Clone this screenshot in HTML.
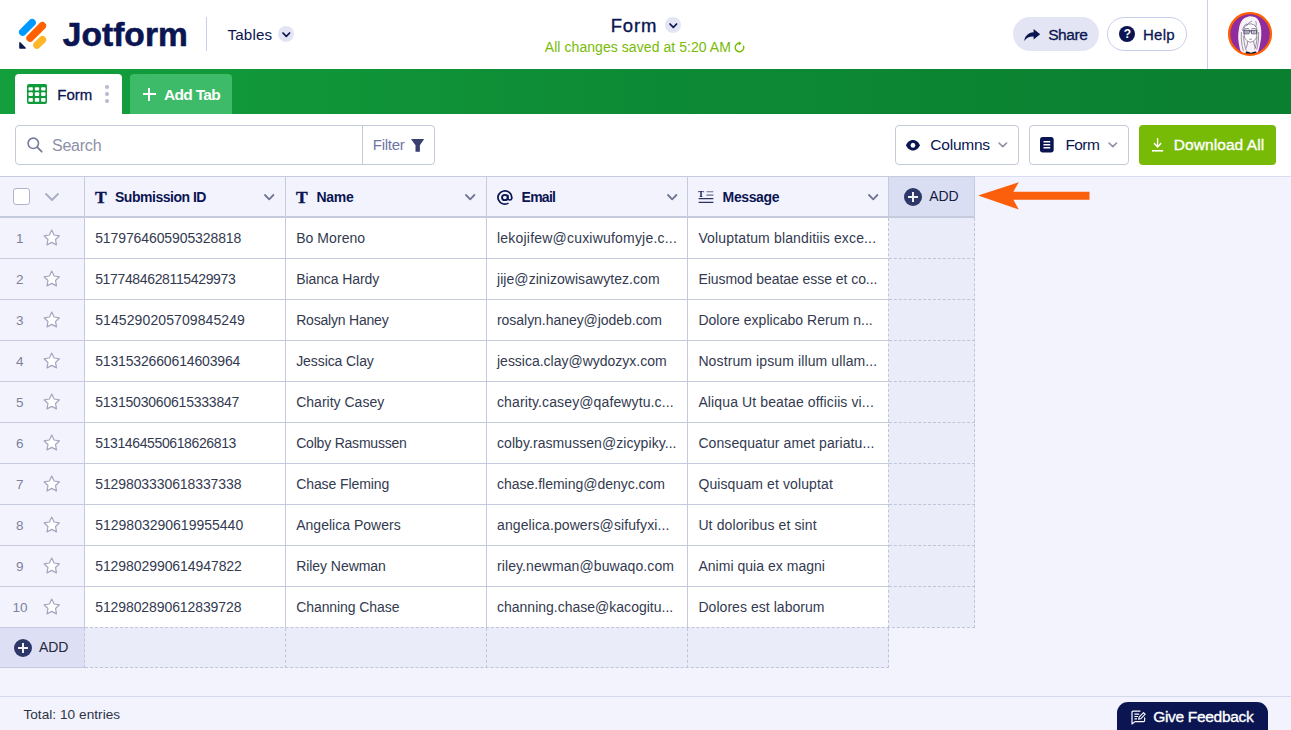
<!DOCTYPE html>
<html lang="en"><head><meta charset="utf-8"><title>Form - Jotform Tables</title>
<style>
*{box-sizing:border-box;margin:0;padding:0}
html,body{width:1291px;height:730px;overflow:hidden;background:#f3f3fe;font-family:"Liberation Sans",sans-serif;color:#0a1551}
.t{position:absolute;white-space:nowrap;display:block}
.a{position:absolute}
svg{position:absolute;overflow:visible}
.hdr{left:0;top:0;width:1291px;height:69px;background:#fff}
.bar{left:0;top:69px;width:1291px;height:45px;background:linear-gradient(90deg,#13a03c 0%,#0d8a35 50%,#0a7f30 100%)}
.tool{left:0;top:114px;width:1291px;height:62px;background:#fff}
.btn{border:1px solid #c3cad8;border-radius:4px;background:#fff}
.hl{background:#c5cbdd;height:1px}
.vl{background:#c5cbdd;width:1px}
</style></head><body>

<div class="a hdr"></div>
<svg style="left:10.4px;top:10.2px" width="50" height="50" viewBox="0 0 50 50">
<path d="M9.9 32.7 L9.9 38.1 L15.3 38.1 Z" fill="#0a1551" stroke="#0a1551" stroke-width="1.3" stroke-linejoin="round"/>
<path d="M22.1 12.7 L12.7 22.1" stroke="#0099ff" stroke-width="7.5" stroke-linecap="round"/>
<path d="M32.4 15.75 L20.07 28.08" stroke="#ff6100" stroke-width="7.5" stroke-linecap="round"/>
<path d="M32.4 29.7 L26.9 35.1" stroke="#ffb629" stroke-width="7.5" stroke-linecap="round"/>
</svg>
<span class="t " style="left:62.8px;top:17.84px;font-size:33.5px;line-height:33.5px;font-weight:700;color:#0a1551;letter-spacing:0.042px;-webkit-text-stroke:0.6px #0a1551;">Jotform</span>
<div class="a" style="left:206px;top:17px;width:1px;height:34px;background:#c8ceed"></div>
<span class="t " style="left:227.5px;top:26.63px;font-size:15.2px;line-height:15.2px;font-weight:400;color:#0a1551;letter-spacing:0.149px;">Tables</span>
<div class="a" style="left:278.3px;top:26.3px;width:16px;height:16px;border-radius:8px;background:#e3e5f5"></div><svg style="left:283.0px;top:33.1px" width="6.6" height="3.3" viewBox="0 0 6.6 3.3"><path d="M0 0 L3.3 3.3 L6.6 0" fill="none" stroke="#0a1551" stroke-width="1.7" stroke-linecap="round" stroke-linejoin="round"/></svg>
<span class="t " style="left:610.7px;top:16.54px;font-size:18.5px;line-height:18.5px;font-weight:400;color:#0a1551;letter-spacing:0.857px;-webkit-text-stroke:0.35px #0a1551;">Form</span>
<div class="a" style="left:665.0px;top:17.0px;width:16px;height:16px;border-radius:8px;background:#e3e5f5"></div><svg style="left:669.7px;top:23.9px" width="6.6" height="3.3" viewBox="0 0 6.6 3.3"><path d="M0 0 L3.3 3.3 L6.6 0" fill="none" stroke="#0a1551" stroke-width="1.7" stroke-linecap="round" stroke-linejoin="round"/></svg>
<span class="t " style="left:544.8px;top:40.45px;font-size:14px;line-height:14px;font-weight:400;color:#78bb07;letter-spacing:0.062px;">All changes saved at 5:20 AM</span>
<svg style="left:733.7px;top:41.3px" width="11" height="12" viewBox="0 0 11 12"><path d="M5.8 2.2 A4.3 4.3 0 1 0 9.6 5.2" fill="none" stroke="#78bb07" stroke-width="1.4" stroke-linecap="round"/><path d="M4.6 0.2 L7.6 2.3 L4.9 4.6 Z" fill="#78bb07"/></svg>
<div class="a" style="left:1013px;top:17px;width:86px;height:34px;border-radius:17px;background:#e3e5f5"></div>
<svg style="left:1024px;top:28.6px" width="16.4" height="12.2" viewBox="0 0 17 13"><path d="M10 0 L17 5.6 L10 11.2 V7.9 C5.6 7.7 2.6 9.2 0 12.8 C0.7 7.4 4 3.9 10 3.4 Z" fill="#0a1551"/></svg>
<span class="t " style="left:1048.2px;top:26.88px;font-size:15.5px;line-height:15.5px;font-weight:400;color:#0a1551;letter-spacing:-0.415px;-webkit-text-stroke:0.3px #0a1551;">Share</span>
<div class="a" style="left:1107px;top:17px;width:80px;height:34px;border-radius:17px;background:#fff;border:1px solid #c8ceed"></div>
<div class="a" style="left:1119px;top:26px;width:16px;height:16px;border-radius:8px;background:#0a1551"></div>
<span class="t " style="left:1123.7px;top:28.14px;font-size:12px;line-height:12px;font-weight:700;color:#fff;">?</span>
<span class="t " style="left:1143.0px;top:26.60px;font-size:15px;line-height:15px;font-weight:400;color:#0a1551;letter-spacing:0.285px;-webkit-text-stroke:0.3px #0a1551;">Help</span>
<div class="a" style="left:1207px;top:0;width:1px;height:69px;background:#c8ceed"></div>
<svg style="left:1228px;top:12px" width="44" height="44" viewBox="0 0 44 44">
<circle cx="22" cy="22" r="21.5" fill="#902c9e"/>
<g>
<path d="M21.6 4.2 C19.8 4.6 18.2 5.2 16.7 6 C15 7 13.8 8.4 13 10.1 C12 12 11.4 13.8 11.1 15.8 C10.5 19 10.2 22 10.2 24.9 C10.3 28 10.6 30.6 11.1 33.1 L12.1 38 L14.6 41.6 L29.4 41.6 L30.6 38 C31.4 35.6 32 33.2 32.3 30.6 C32.9 28 33.3 25.6 33.3 23.2 C33.4 20 33.2 17 32.7 14.2 C32.2 12 31.5 10 30.6 8.4 C29.5 6.9 28.2 5.8 26.5 5.1 C25 4.4 23.4 4.1 21.6 4.2 Z" fill="#f7f3f8"/>
<path d="M16 17 C16.5 13.5 20 11.5 23.5 12 C26.5 12.4 28.6 14.5 29 17.5 L28.8 24 C28 27.5 25.5 30 22.5 30 C19.5 30 17 27.5 16.2 24 Z" fill="#fff" stroke="#54465f" stroke-width="0.6"/>
<path d="M15.4 18.4 H29 M16 18.5 v3.3 h5 v-3.3 M23.6 18.5 v3.3 h5 v-3.3 M21 19.8 h2.6" fill="none" stroke="#3a3150" stroke-width="0.75"/>
<path d="M17 19.3 h3 v1.5 h-3 z M24.6 19.3 h3 v1.5 h-3 z" fill="#8f88a3"/>
<path d="M16.4 17.2 C18 16.4 20 16.4 21.4 17 M23.4 17 C25 16.4 27 16.4 28.4 17.2" fill="none" stroke="#4a3d5c" stroke-width="0.7"/>
<path d="M21.4 27.2 h2.4" stroke="#55465f" stroke-width="0.7"/>
<path d="M19 11.6 C16 13 14.8 16 14.6 19 M24 9 C21 10.6 19.4 12 18.6 14 M27.6 9 C28.6 11 28.4 13.4 27.4 15 M13.4 20 C13 27 13.6 33 15.4 39 M15.6 24 C15.8 30 16.8 35 18.4 38.6 M30.6 20 C30.8 27 30.2 32 28.6 37.6 M29 25 C28.8 30 28 34 26.6 37.4" fill="none" stroke="#5e5070" stroke-width="0.6"/>
<path d="M17.6 40 C19.6 38.8 21.4 40.8 23 40.8 C24.8 40.8 26.6 38.8 28.6 40 L28 42.7 L18 42.7 Z" fill="#1d1830"/><path d="M19.4 29.4 C19.6 32 19 34 17.8 36.4 M25.8 29.4 C25.8 32 26.4 34 27.6 36.2" fill="none" stroke="#54465f" stroke-width="0.6"/>
</g>
<circle cx="22" cy="22" r="20.9" fill="none" stroke="#ff6100" stroke-width="2.3"/>
</svg>
<div class="a bar"></div>
<div class="a" style="left:15px;top:74px;width:107px;height:40px;background:#fff;border-radius:4px 4px 0 0"></div>
<svg style="left:27px;top:84px" width="20" height="20" viewBox="0 0 20 20"><rect x="0" y="0" width="20" height="20" rx="2" fill="#0f9a3b"/><g fill="#fff"><rect x="1.5" y="3.2" width="4.4" height="3.2" rx="0.9"/><rect x="7.8" y="3.2" width="4.4" height="3.2" rx="0.9"/><rect x="14.1" y="3.2" width="4.4" height="3.2" rx="0.9"/><rect x="1.5" y="8.3" width="4.4" height="3.7" rx="0.9"/><rect x="7.8" y="8.3" width="4.4" height="3.7" rx="0.9"/><rect x="14.1" y="8.3" width="4.4" height="3.7" rx="0.9"/><rect x="1.5" y="14.1" width="4.4" height="3.7" rx="0.9"/><rect x="7.8" y="14.1" width="4.4" height="3.7" rx="0.9"/><rect x="14.1" y="14.1" width="4.4" height="3.7" rx="0.9"/></g></svg>
<span class="t " style="left:57.3px;top:87.40px;font-size:15px;line-height:15px;font-weight:400;color:#0a1551;letter-spacing:0.000px;-webkit-text-stroke:0.3px #0a1551;">Form</span>
<div class="a" style="left:105.3px;top:85.2px;width:4px;height:4px;border-radius:2px;background:#b5b9d1"></div>
<div class="a" style="left:105.3px;top:92.1px;width:4px;height:4px;border-radius:2px;background:#b5b9d1"></div>
<div class="a" style="left:105.3px;top:98.8px;width:4px;height:4px;border-radius:2px;background:#b5b9d1"></div>
<div class="a" style="left:130px;top:74px;width:102px;height:40px;background:#3dbb68;border-radius:4px 4px 0 0"></div>
<div class="a" style="left:142.5px;top:93.2px;width:13.4px;height:2px;background:#fff"></div><div class="a" style="left:148.2px;top:87.5px;width:2px;height:13.4px;background:#fff"></div>
<span class="t " style="left:164.0px;top:86.88px;font-size:15.5px;line-height:15.5px;font-weight:700;color:#fff;letter-spacing:-0.692px;">Add Tab</span>
<div class="a tool"></div>
<div class="a btn" style="left:15px;top:125px;width:420px;height:40px"></div>
<div class="a" style="left:362px;top:126px;width:1px;height:38px;background:#c3cad8"></div>
<svg style="left:26.8px;top:136.8px" width="16" height="16" viewBox="0 0 16 16"><circle cx="6.3" cy="6.3" r="5.2" fill="none" stroke="#767b9c" stroke-width="1.6"/><path d="M10.2 10.2 L14.7 14.7" stroke="#767b9c" stroke-width="1.8" stroke-linecap="round"/></svg>
<span class="t " style="left:52.0px;top:138.46px;font-size:16px;line-height:16px;font-weight:400;color:#8d91a8;letter-spacing:-0.234px;">Search</span>
<span class="t " style="left:372.8px;top:137.30px;font-size:15px;line-height:15px;font-weight:400;color:#6f76a7;letter-spacing:-0.257px;">Filter</span>
<svg style="left:410.8px;top:139.1px" width="13.2" height="12.7" viewBox="0 0 13.2 12.7"><path d="M0 0 H13.2 L8.9 6.3 V12.7 H4.5 V6.3 Z" fill="#394070"/></svg>
<div class="a btn" style="left:895px;top:125px;width:124px;height:40px"></div>
<svg style="left:906px;top:139.6px" width="13.9" height="10.5" viewBox="0 0 15 10.4" preserveAspectRatio="none"><path d="M7.5 0 C11 0 13.8 2.4 15 5.2 C13.8 8 11 10.4 7.5 10.4 C4 10.4 1.2 8 0 5.2 C1.2 2.4 4 0 7.5 0 Z" fill="#0a1551"/><circle cx="7.5" cy="5.2" r="2.5" fill="#fff"/></svg>
<span class="t " style="left:930.3px;top:136.88px;font-size:15.5px;line-height:15.5px;font-weight:400;color:#0a1551;letter-spacing:-0.225px;">Columns</span>
<svg style="left:999.0px;top:142.6px" width="7.6" height="3.7" viewBox="0 0 7.6 3.7"><path d="M0 0 L3.8 3.7 L7.6 0" fill="none" stroke="#8d91a8" stroke-width="1.6" stroke-linecap="round" stroke-linejoin="round"/></svg>
<div class="a btn" style="left:1029px;top:125px;width:100px;height:40px"></div>
<svg style="left:1040.3px;top:137.3px" width="13.7" height="15.4" viewBox="0 0 13.4 15" preserveAspectRatio="none"><rect x="0" y="0" width="13.4" height="15" rx="2.6" fill="#0a1551"/><path d="M3.4 4.6 H10 M3.4 7.5 H10 M3.4 10.4 H10" stroke="#fff" stroke-width="1.5"/></svg>
<span class="t " style="left:1065.5px;top:136.88px;font-size:15.5px;line-height:15.5px;font-weight:400;color:#0a1551;letter-spacing:-0.618px;">Form</span>
<svg style="left:1108.5px;top:142.6px" width="7.6" height="3.7" viewBox="0 0 7.6 3.7"><path d="M0 0 L3.8 3.7 L7.6 0" fill="none" stroke="#8d91a8" stroke-width="1.6" stroke-linecap="round" stroke-linejoin="round"/></svg>
<div class="a" style="left:1139px;top:125px;width:137px;height:40px;border-radius:4px;background:#78bb07"></div>
<svg style="left:1152.3px;top:138.2px" width="11.2" height="13.8" viewBox="0 0 12.6 14" preserveAspectRatio="none"><path d="M6.3 0 V9 M2.3 5.2 L6.3 9.2 L10.3 5.2" fill="none" stroke="#fff" stroke-width="1.5"/><path d="M0 13 H12.6" stroke="#fff" stroke-width="1.6"/></svg>
<span class="t " style="left:1173.7px;top:136.88px;font-size:15.5px;line-height:15.5px;font-weight:400;color:#fff;letter-spacing:0.083px;-webkit-text-stroke:0.35px #fff;">Download All</span>
<div class="a" style="left:0;top:176px;width:1291px;height:42px;background:#f3f3fe"></div>
<div class="a" style="left:0;top:176px;width:1291px;height:1px;background:#d9ddf2"></div>
<div class="a hl" style="left:0;top:176px;width:975px"></div>
<div class="a" style="left:889px;top:177px;width:86px;height:41px;background:#dadef3;border-right:1px solid #c5cbdd"></div>
<div class="a" style="left:85px;top:218px;width:804px;height:410px;background:#fff"></div>
<div class="a" style="left:889px;top:218px;width:86px;height:410px;background:#eaecfa;border-right:1px dashed #bfc5da"></div>
<div class="a" style="left:0;top:628px;width:85px;height:40px;background:#dddff5;border-bottom:1px solid #c5cbdd"></div>
<div class="a" style="left:85px;top:628px;width:804px;height:40px;background:#eaecfa;border-right:1px dashed #bfc5da;border-bottom:1px dashed #bfc5da"></div>
<div class="a" style="left:285px;top:628px;width:1px;height:40px;border-left:1px dashed #bfc5da"></div>
<div class="a" style="left:486px;top:628px;width:1px;height:40px;border-left:1px dashed #bfc5da"></div>
<div class="a" style="left:687px;top:628px;width:1px;height:40px;border-left:1px dashed #bfc5da"></div>
<div class="a" style="left:0;top:216px;width:975px;height:2px;background:#c5cbdd"></div>
<div class="a vl" style="left:84px;top:176px;height:452px"></div>
<div class="a vl" style="left:285px;top:176px;height:452px"></div>
<div class="a vl" style="left:486px;top:176px;height:452px"></div>
<div class="a vl" style="left:687px;top:176px;height:452px"></div>
<div class="a vl" style="left:888px;top:176px;height:42px"></div>
<div class="a" style="left:888px;top:218px;width:1px;height:410px;background:#f4f5fc;border-left:1px dashed #bfc5da"></div>
<div class="a" style="left:84px;top:628px;width:1px;height:40px;border-left:1px dashed #bfc5da"></div>
<div class="a hl" style="left:0;top:258px;width:889px"></div>
<div class="a" style="left:889px;top:258px;width:86px;height:1px;border-top:1px dashed #bfc5da"></div>
<div class="a hl" style="left:0;top:299px;width:889px"></div>
<div class="a" style="left:889px;top:299px;width:86px;height:1px;border-top:1px dashed #bfc5da"></div>
<div class="a hl" style="left:0;top:340px;width:889px"></div>
<div class="a" style="left:889px;top:340px;width:86px;height:1px;border-top:1px dashed #bfc5da"></div>
<div class="a hl" style="left:0;top:381px;width:889px"></div>
<div class="a" style="left:889px;top:381px;width:86px;height:1px;border-top:1px dashed #bfc5da"></div>
<div class="a hl" style="left:0;top:422px;width:889px"></div>
<div class="a" style="left:889px;top:422px;width:86px;height:1px;border-top:1px dashed #bfc5da"></div>
<div class="a hl" style="left:0;top:463px;width:889px"></div>
<div class="a" style="left:889px;top:463px;width:86px;height:1px;border-top:1px dashed #bfc5da"></div>
<div class="a hl" style="left:0;top:504px;width:889px"></div>
<div class="a" style="left:889px;top:504px;width:86px;height:1px;border-top:1px dashed #bfc5da"></div>
<div class="a hl" style="left:0;top:545px;width:889px"></div>
<div class="a" style="left:889px;top:545px;width:86px;height:1px;border-top:1px dashed #bfc5da"></div>
<div class="a hl" style="left:0;top:586px;width:889px"></div>
<div class="a" style="left:889px;top:586px;width:86px;height:1px;border-top:1px dashed #bfc5da"></div>
<div class="a" style="left:0;top:627px;width:85px;height:1px;background:#c5cbdd"></div>
<div class="a" style="left:85px;top:627px;width:890px;height:1px;border-top:1px dashed #bfc5da;background:#eef0fb"></div>
<div class="a" style="left:13px;top:188px;width:17px;height:17px;border:1.6px solid #b0b4c9;border-radius:3px;background:#fff"></div>
<svg style="left:46.0px;top:193.5px" width="12" height="6" viewBox="0 0 12 6"><path d="M0 0 L6.0 6 L12 0" fill="none" stroke="#aaaec3" stroke-width="1.9" stroke-linecap="round" stroke-linejoin="round"/></svg>
<span class="t " style="left:94.9px;top:189.19px;font-size:17.5px;line-height:17.5px;font-weight:700;color:#0a1551;font-family:'Liberation Serif',serif;-webkit-text-stroke:0.4px #0a1551;">T</span>
<span class="t " style="left:115.0px;top:190.15px;font-size:14px;line-height:14px;font-weight:700;color:#0a1551;letter-spacing:-0.480px;">Submission ID</span>
<span class="t " style="left:295.9px;top:189.19px;font-size:17.5px;line-height:17.5px;font-weight:700;color:#0a1551;font-family:'Liberation Serif',serif;-webkit-text-stroke:0.4px #0a1551;">T</span>
<span class="t " style="left:316.5px;top:190.15px;font-size:14px;line-height:14px;font-weight:700;color:#0a1551;letter-spacing:-0.285px;">Name</span>
<svg style="left:497.1px;top:189.7px" width="15.8" height="15" viewBox="0 0 16 16" preserveAspectRatio="none"><circle cx="8" cy="8" r="2.9" fill="none" stroke="#0a1551" stroke-width="1.9"/><path d="M10.9 5 V9 A2.1 2.1 0 0 0 15 9 V8 A7 7 0 1 0 11.6 14" fill="none" stroke="#0a1551" stroke-width="1.8"/></svg>
<span class="t " style="left:521.5px;top:190.15px;font-size:14px;line-height:14px;font-weight:700;color:#0a1551;letter-spacing:-0.712px;">Email</span>
<span class="t " style="left:698.1px;top:189.55px;font-size:8.8px;line-height:8.8px;font-weight:700;color:#0a1551;font-family:'Liberation Serif',serif;">T</span>
<svg style="left:698px;top:190px" width="16" height="14" viewBox="0 0 16 14"><path d="M8.4 1.7 H15.4 M8.4 5.1 H15.4" stroke="#6a7098" stroke-width="1.1"/><path d="M0.6 8.6 H15.4 M0.6 12.3 H15.4" stroke="#2a3262" stroke-width="1.2"/></svg>
<span class="t " style="left:722.6px;top:190.15px;font-size:14px;line-height:14px;font-weight:700;color:#0a1551;letter-spacing:-0.379px;">Message</span>
<svg style="left:265.3px;top:194.8px" width="8.4" height="4.3" viewBox="0 0 8.4 4.3"><path d="M0 0 L4.2 4.3 L8.4 0" fill="none" stroke="#6f7693" stroke-width="1.8" stroke-linecap="round" stroke-linejoin="round"/></svg>
<svg style="left:466.3px;top:194.8px" width="8.4" height="4.3" viewBox="0 0 8.4 4.3"><path d="M0 0 L4.2 4.3 L8.4 0" fill="none" stroke="#6f7693" stroke-width="1.8" stroke-linecap="round" stroke-linejoin="round"/></svg>
<svg style="left:667.8px;top:194.8px" width="8.4" height="4.3" viewBox="0 0 8.4 4.3"><path d="M0 0 L4.2 4.3 L8.4 0" fill="none" stroke="#6f7693" stroke-width="1.8" stroke-linecap="round" stroke-linejoin="round"/></svg>
<svg style="left:868.8px;top:194.8px" width="8.4" height="4.3" viewBox="0 0 8.4 4.3"><path d="M0 0 L4.2 4.3 L8.4 0" fill="none" stroke="#6f7693" stroke-width="1.8" stroke-linecap="round" stroke-linejoin="round"/></svg>
<div class="a" style="left:904px;top:188px;width:18px;height:18px;border-radius:9px;background:#2e3868"></div>
<div class="a" style="left:908.2px;top:196.2px;width:9.6px;height:1.6px;background:#f1f1f6"></div><div class="a" style="left:912.2px;top:192.2px;width:1.6px;height:9.6px;background:#f1f1f6"></div>
<span class="t " style="left:929.2px;top:189.45px;font-size:14px;line-height:14px;font-weight:400;color:#141b45;letter-spacing:-0.121px;">ADD</span>
<svg style="left:976px;top:178px" width="116" height="36" viewBox="0 0 116 36"><path d="M2.1 17.6 L42.8 4.2 Q40 9 37.4 13.7 L113.5 13.7 V21.7 L37.4 21.7 Q40 26.5 42.8 31.5 Z" fill="#fc5f0c"/></svg>
<span class="t " style="left:16.1px;top:231.57px;font-size:13.5px;line-height:13.5px;font-weight:400;color:#7c819b;">1</span>
<svg style="left:43.3px;top:229.3px" width="17.5" height="17" viewBox="0 0 17.5 17"><path d="M8.75 1.1 L11.1 6 L16.4 6.8 L12.55 10.55 L13.5 15.9 L8.75 13.4 L4 15.9 L4.95 10.55 L1.1 6.8 L6.4 6 Z" fill="#fff" stroke="#a3a7bf" stroke-width="1.2" stroke-linejoin="round"/></svg>
<span class="t " style="left:95.2px;top:231.15px;font-size:14px;line-height:14px;font-weight:400;color:#333a50;letter-spacing:-0.102px;">5179764605905328818</span>
<span class="t " style="left:296.2px;top:231.15px;font-size:14px;line-height:14px;font-weight:400;color:#333a50;letter-spacing:0.057px;">Bo Moreno</span>
<span class="t " style="left:497.0px;top:231.15px;font-size:14px;line-height:14px;font-weight:400;color:#333a50;letter-spacing:0.204px;">lekojifew@cuxiwufomyje.c...</span>
<span class="t " style="left:698.4px;top:231.15px;font-size:14px;line-height:14px;font-weight:400;color:#333a50;letter-spacing:0.147px;">Voluptatum blanditiis exce...</span>
<span class="t " style="left:16.1px;top:272.57px;font-size:13.5px;line-height:13.5px;font-weight:400;color:#7c819b;">2</span>
<svg style="left:43.3px;top:270.3px" width="17.5" height="17" viewBox="0 0 17.5 17"><path d="M8.75 1.1 L11.1 6 L16.4 6.8 L12.55 10.55 L13.5 15.9 L8.75 13.4 L4 15.9 L4.95 10.55 L1.1 6.8 L6.4 6 Z" fill="#fff" stroke="#a3a7bf" stroke-width="1.2" stroke-linejoin="round"/></svg>
<span class="t " style="left:95.2px;top:272.15px;font-size:14px;line-height:14px;font-weight:400;color:#333a50;letter-spacing:-0.353px;">5177484628115429973</span>
<span class="t " style="left:296.2px;top:272.15px;font-size:14px;line-height:14px;font-weight:400;color:#333a50;letter-spacing:-0.087px;">Bianca Hardy</span>
<span class="t " style="left:497.0px;top:272.15px;font-size:14px;line-height:14px;font-weight:400;color:#333a50;letter-spacing:0.060px;">jije@zinizowisawytez.com</span>
<span class="t " style="left:698.4px;top:272.15px;font-size:14px;line-height:14px;font-weight:400;color:#333a50;letter-spacing:-0.056px;">Eiusmod beatae esse et co...</span>
<span class="t " style="left:16.1px;top:313.57px;font-size:13.5px;line-height:13.5px;font-weight:400;color:#7c819b;">3</span>
<svg style="left:43.3px;top:311.3px" width="17.5" height="17" viewBox="0 0 17.5 17"><path d="M8.75 1.1 L11.1 6 L16.4 6.8 L12.55 10.55 L13.5 15.9 L8.75 13.4 L4 15.9 L4.95 10.55 L1.1 6.8 L6.4 6 Z" fill="#fff" stroke="#a3a7bf" stroke-width="1.2" stroke-linejoin="round"/></svg>
<span class="t " style="left:95.2px;top:313.15px;font-size:14px;line-height:14px;font-weight:400;color:#333a50;letter-spacing:0.098px;">5145290205709845249</span>
<span class="t " style="left:296.2px;top:313.15px;font-size:14px;line-height:14px;font-weight:400;color:#333a50;letter-spacing:-0.203px;">Rosalyn Haney</span>
<span class="t " style="left:497.0px;top:313.15px;font-size:14px;line-height:14px;font-weight:400;color:#333a50;letter-spacing:-0.043px;">rosalyn.haney@jodeb.com</span>
<span class="t " style="left:698.4px;top:313.15px;font-size:14px;line-height:14px;font-weight:400;color:#333a50;letter-spacing:0.032px;">Dolore explicabo Rerum n...</span>
<span class="t " style="left:16.1px;top:354.57px;font-size:13.5px;line-height:13.5px;font-weight:400;color:#7c819b;">4</span>
<svg style="left:43.3px;top:352.3px" width="17.5" height="17" viewBox="0 0 17.5 17"><path d="M8.75 1.1 L11.1 6 L16.4 6.8 L12.55 10.55 L13.5 15.9 L8.75 13.4 L4 15.9 L4.95 10.55 L1.1 6.8 L6.4 6 Z" fill="#fff" stroke="#a3a7bf" stroke-width="1.2" stroke-linejoin="round"/></svg>
<span class="t " style="left:95.2px;top:354.15px;font-size:14px;line-height:14px;font-weight:400;color:#333a50;letter-spacing:-0.155px;">5131532660614603964</span>
<span class="t " style="left:296.2px;top:354.15px;font-size:14px;line-height:14px;font-weight:400;color:#333a50;letter-spacing:-0.083px;">Jessica Clay</span>
<span class="t " style="left:497.0px;top:354.15px;font-size:14px;line-height:14px;font-weight:400;color:#333a50;letter-spacing:-0.009px;">jessica.clay@wydozyx.com</span>
<span class="t " style="left:698.4px;top:354.15px;font-size:14px;line-height:14px;font-weight:400;color:#333a50;letter-spacing:0.113px;">Nostrum ipsum illum ullam...</span>
<span class="t " style="left:16.1px;top:395.57px;font-size:13.5px;line-height:13.5px;font-weight:400;color:#7c819b;">5</span>
<svg style="left:43.3px;top:393.3px" width="17.5" height="17" viewBox="0 0 17.5 17"><path d="M8.75 1.1 L11.1 6 L16.4 6.8 L12.55 10.55 L13.5 15.9 L8.75 13.4 L4 15.9 L4.95 10.55 L1.1 6.8 L6.4 6 Z" fill="#fff" stroke="#a3a7bf" stroke-width="1.2" stroke-linejoin="round"/></svg>
<span class="t " style="left:95.2px;top:395.15px;font-size:14px;line-height:14px;font-weight:400;color:#333a50;letter-spacing:-0.207px;">5131503060615333847</span>
<span class="t " style="left:296.2px;top:395.15px;font-size:14px;line-height:14px;font-weight:400;color:#333a50;letter-spacing:0.006px;">Charity Casey</span>
<span class="t " style="left:497.0px;top:395.15px;font-size:14px;line-height:14px;font-weight:400;color:#333a50;letter-spacing:0.123px;">charity.casey@qafewytu.c...</span>
<span class="t " style="left:698.4px;top:395.15px;font-size:14px;line-height:14px;font-weight:400;color:#333a50;letter-spacing:0.122px;">Aliqua Ut beatae officiis vi...</span>
<span class="t " style="left:16.1px;top:436.57px;font-size:13.5px;line-height:13.5px;font-weight:400;color:#7c819b;">6</span>
<svg style="left:43.3px;top:434.3px" width="17.5" height="17" viewBox="0 0 17.5 17"><path d="M8.75 1.1 L11.1 6 L16.4 6.8 L12.55 10.55 L13.5 15.9 L8.75 13.4 L4 15.9 L4.95 10.55 L1.1 6.8 L6.4 6 Z" fill="#fff" stroke="#a3a7bf" stroke-width="1.2" stroke-linejoin="round"/></svg>
<span class="t " style="left:95.2px;top:436.15px;font-size:14px;line-height:14px;font-weight:400;color:#333a50;letter-spacing:-0.376px;">5131464550618626813</span>
<span class="t " style="left:296.2px;top:436.15px;font-size:14px;line-height:14px;font-weight:400;color:#333a50;letter-spacing:-0.207px;">Colby Rasmussen</span>
<span class="t " style="left:497.0px;top:436.15px;font-size:14px;line-height:14px;font-weight:400;color:#333a50;letter-spacing:0.064px;">colby.rasmussen@zicypiky...</span>
<span class="t " style="left:698.4px;top:436.15px;font-size:14px;line-height:14px;font-weight:400;color:#333a50;letter-spacing:0.091px;">Consequatur amet pariatu...</span>
<span class="t " style="left:16.1px;top:477.57px;font-size:13.5px;line-height:13.5px;font-weight:400;color:#7c819b;">7</span>
<svg style="left:43.3px;top:475.3px" width="17.5" height="17" viewBox="0 0 17.5 17"><path d="M8.75 1.1 L11.1 6 L16.4 6.8 L12.55 10.55 L13.5 15.9 L8.75 13.4 L4 15.9 L4.95 10.55 L1.1 6.8 L6.4 6 Z" fill="#fff" stroke="#a3a7bf" stroke-width="1.2" stroke-linejoin="round"/></svg>
<span class="t " style="left:95.2px;top:477.15px;font-size:14px;line-height:14px;font-weight:400;color:#333a50;letter-spacing:-0.091px;">5129803330618337338</span>
<span class="t " style="left:296.2px;top:477.15px;font-size:14px;line-height:14px;font-weight:400;color:#333a50;letter-spacing:-0.089px;">Chase Fleming</span>
<span class="t " style="left:497.0px;top:477.15px;font-size:14px;line-height:14px;font-weight:400;color:#333a50;letter-spacing:-0.013px;">chase.fleming@denyc.com</span>
<span class="t " style="left:698.4px;top:477.15px;font-size:14px;line-height:14px;font-weight:400;color:#333a50;letter-spacing:0.110px;">Quisquam et voluptat</span>
<span class="t " style="left:16.1px;top:518.57px;font-size:13.5px;line-height:13.5px;font-weight:400;color:#7c819b;">8</span>
<svg style="left:43.3px;top:516.3px" width="17.5" height="17" viewBox="0 0 17.5 17"><path d="M8.75 1.1 L11.1 6 L16.4 6.8 L12.55 10.55 L13.5 15.9 L8.75 13.4 L4 15.9 L4.95 10.55 L1.1 6.8 L6.4 6 Z" fill="#fff" stroke="#a3a7bf" stroke-width="1.2" stroke-linejoin="round"/></svg>
<span class="t " style="left:95.2px;top:518.15px;font-size:14px;line-height:14px;font-weight:400;color:#333a50;letter-spacing:0.003px;">5129803290619955440</span>
<span class="t " style="left:296.2px;top:518.15px;font-size:14px;line-height:14px;font-weight:400;color:#333a50;letter-spacing:0.015px;">Angelica Powers</span>
<span class="t " style="left:497.0px;top:518.15px;font-size:14px;line-height:14px;font-weight:400;color:#333a50;letter-spacing:0.095px;">angelica.powers@sifufyxi...</span>
<span class="t " style="left:698.4px;top:518.15px;font-size:14px;line-height:14px;font-weight:400;color:#333a50;letter-spacing:0.122px;">Ut doloribus et sint</span>
<span class="t " style="left:16.1px;top:559.57px;font-size:13.5px;line-height:13.5px;font-weight:400;color:#7c819b;">9</span>
<svg style="left:43.3px;top:557.3px" width="17.5" height="17" viewBox="0 0 17.5 17"><path d="M8.75 1.1 L11.1 6 L16.4 6.8 L12.55 10.55 L13.5 15.9 L8.75 13.4 L4 15.9 L4.95 10.55 L1.1 6.8 L6.4 6 Z" fill="#fff" stroke="#a3a7bf" stroke-width="1.2" stroke-linejoin="round"/></svg>
<span class="t " style="left:95.2px;top:559.15px;font-size:14px;line-height:14px;font-weight:400;color:#333a50;letter-spacing:-0.070px;">5129802990614947822</span>
<span class="t " style="left:296.2px;top:559.15px;font-size:14px;line-height:14px;font-weight:400;color:#333a50;letter-spacing:-0.054px;">Riley Newman</span>
<span class="t " style="left:497.0px;top:559.15px;font-size:14px;line-height:14px;font-weight:400;color:#333a50;letter-spacing:0.086px;">riley.newman@buwaqo.com</span>
<span class="t " style="left:698.4px;top:559.15px;font-size:14px;line-height:14px;font-weight:400;color:#333a50;letter-spacing:0.028px;">Animi quia ex magni</span>
<span class="t " style="left:12.4px;top:600.57px;font-size:13.5px;line-height:13.5px;font-weight:400;color:#7c819b;">10</span>
<svg style="left:43.3px;top:598.3px" width="17.5" height="17" viewBox="0 0 17.5 17"><path d="M8.75 1.1 L11.1 6 L16.4 6.8 L12.55 10.55 L13.5 15.9 L8.75 13.4 L4 15.9 L4.95 10.55 L1.1 6.8 L6.4 6 Z" fill="#fff" stroke="#a3a7bf" stroke-width="1.2" stroke-linejoin="round"/></svg>
<span class="t " style="left:95.2px;top:600.15px;font-size:14px;line-height:14px;font-weight:400;color:#333a50;letter-spacing:-0.091px;">5129802890612839728</span>
<span class="t " style="left:296.2px;top:600.15px;font-size:14px;line-height:14px;font-weight:400;color:#333a50;letter-spacing:-0.078px;">Channing Chase</span>
<span class="t " style="left:497.0px;top:600.15px;font-size:14px;line-height:14px;font-weight:400;color:#333a50;letter-spacing:0.003px;">channing.chase@kacogitu...</span>
<span class="t " style="left:698.4px;top:600.15px;font-size:14px;line-height:14px;font-weight:400;color:#333a50;letter-spacing:0.048px;">Dolores est laborum</span>
<div class="a" style="left:14px;top:639px;width:18px;height:18px;border-radius:9px;background:#2e3868"></div>
<div class="a" style="left:18.2px;top:647.2px;width:9.6px;height:1.5px;background:#f1f1f6"></div><div class="a" style="left:22.25px;top:643.2px;width:1.5px;height:9.6px;background:#f1f1f6"></div>
<span class="t " style="left:39.0px;top:640.45px;font-size:14px;line-height:14px;font-weight:400;color:#23283a;letter-spacing:-0.087px;">ADD</span>
<div class="a" style="left:0;top:696px;width:1291px;height:1px;background:#d3d8ee"></div>
<span class="t " style="left:23.4px;top:707.79px;font-size:13.6px;line-height:13.6px;font-weight:400;color:#2c3345;letter-spacing:0.049px;">Total: 10 entries</span>
<div class="a" style="left:1117px;top:702px;width:151px;height:40px;border-radius:11px;background:#0a1551"></div>
<svg style="left:1130.5px;top:709.5px" width="15" height="15" viewBox="0 0 15 15"><path d="M9.4 1.2 H2 A1 1 0 0 0 1 2.2 V14 L4 11.6 H12.6 A1 1 0 0 0 13.6 10.6 V7.6" fill="none" stroke="#fff" stroke-width="1.2" stroke-linejoin="round"/><path d="M3.4 4.1 H8.2 M3.4 6.5 H7 M3.4 8.9 H6" stroke="#fff" stroke-width="1.1"/><path d="M7.6 9.3 L8.1 7.2 L12.5 2.6 L14.2 4.1 L9.7 8.8 Z" fill="none" stroke="#fff" stroke-width="1.1" stroke-linejoin="round"/></svg>
<span class="t " style="left:1153.2px;top:708.88px;font-size:15.5px;line-height:15.5px;font-weight:400;color:#fff;letter-spacing:-0.312px;-webkit-text-stroke:0.35px #fff;">Give Feedback</span>
</body></html>
